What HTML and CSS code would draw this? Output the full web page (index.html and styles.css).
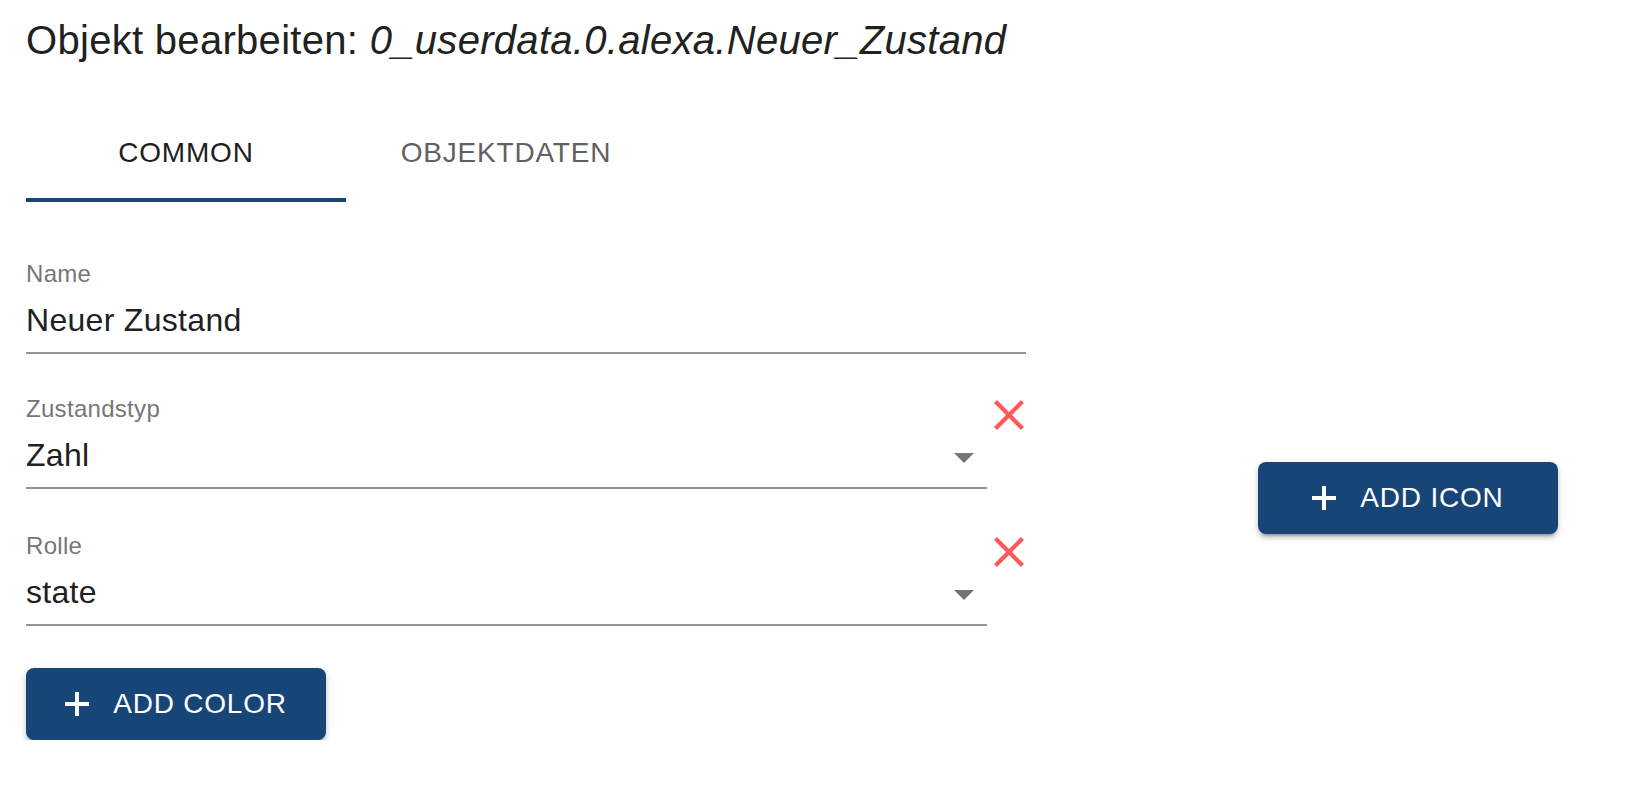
FILE: index.html
```html
<!DOCTYPE html>
<html lang="de">
<head>
<meta charset="utf-8">
<title>Objekt bearbeiten</title>
<link rel="stylesheet" href="styles.css">
</head>
<body>
<div class="page">
  <h1 class="title">Objekt bearbeiten: <em>0_userdata.0.alexa.Neuer_Zustand</em></h1>
  <div class="tabs">
    <div class="tab active">COMMON</div>
    <div class="tab">OBJEKTDATEN</div>
  </div>
  <div class="content">
    <div class="form">
      <div class="field">
        <div class="label">Name</div>
        <div class="input"><span class="value">Neuer Zustand</span></div>
      </div>
      <div class="row">
        <div class="field select">
          <div class="label">Zustandstyp</div>
          <div class="input">
            <span class="value">Zahl</span>
            <svg class="arrow" viewBox="7 10 10 5" width="20" height="10"><path d="M7 10l5 5 5-5z"/></svg>
          </div>
        </div>
        <div class="clear">
          <svg viewBox="5 5 14 14" width="30" height="30"><path d="M19 6.41L17.59 5 12 10.59 6.41 5 5 6.41 10.59 12 5 17.59 6.41 19 12 13.41 17.59 19 19 17.59 13.41 12z"/></svg>
        </div>
      </div>
      <div class="row row-role">
        <div class="field select">
          <div class="label">Rolle</div>
          <div class="input">
            <span class="value">state</span>
            <svg class="arrow" viewBox="7 10 10 5" width="20" height="10"><path d="M7 10l5 5 5-5z"/></svg>
          </div>
        </div>
        <div class="clear">
          <svg viewBox="5 5 14 14" width="30" height="30"><path d="M19 6.41L17.59 5 12 10.59 6.41 5 5 6.41 10.59 12 5 17.59 6.41 19 12 13.41 17.59 19 19 17.59 13.41 12z"/></svg>
        </div>
      </div>
      <button class="btn btn-color">
        <svg class="plus" viewBox="0 0 24 24" width="24" height="24"><rect x="0" y="10" width="24" height="4"/><rect x="10" y="0" width="4" height="24"/></svg>
        <span>ADD COLOR</span>
      </button>
    </div>
    <div class="side">
      <button class="btn">
        <svg class="plus" viewBox="0 0 24 24" width="24" height="24"><rect x="0" y="10" width="24" height="4"/><rect x="10" y="0" width="4" height="24"/></svg>
        <span>ADD ICON</span>
      </button>
    </div>
  </div>
</div>
</body>
</html>
```
FILE: styles.css
```css
* { box-sizing: border-box; }

html, body {
  margin: 0;
  padding: 0;
  background: #ffffff;
}

body {
  font-family: "Liberation Sans", Arial, Helvetica, sans-serif;
  color: #212121;
}

.page {
  padding: 8px 0 0 26px;
}

.title {
  margin: 0;
  font-size: 40px;
  font-weight: 400;
  line-height: 64px;
  letter-spacing: 0.3px;
  color: #212121;
}

.title em {
  font-style: italic;
}

.tabs {
  display: flex;
  margin-top: 34px;
  height: 96px;
}

.tab {
  width: 320px;
  height: 96px;
  display: flex;
  align-items: center;
  justify-content: center;
  font-size: 28px;
  letter-spacing: 0.8px;
  color: #616161;
  border-bottom: 4px solid transparent;
  padding-top: 2px;
}

.tab.active {
  color: #1e1e1e;
  border-bottom-color: #184578;
}

.content {
  display: flex;
  align-items: flex-start;
  padding-top: 60px;
}

.form {
  width: 1000px;
  display: flex;
  flex-direction: column;
  gap: 43px;
}

.field {
  display: flex;
  flex-direction: column;
}

.label {
  font-size: 24px;
  line-height: 24px;
  letter-spacing: 0.3px;
  color: #767676;
  margin-bottom: 15px;
}

.input {
  display: flex;
  align-items: flex-start;
  padding-bottom: 13px;
  border-bottom: 2px solid #949494;
}

.value {
  flex: 1;
  font-size: 32px;
  line-height: 38px;
  letter-spacing: 0.3px;
  color: #212121;
}

.arrow {
  fill: #757575;
  margin-top: 17px;
  margin-right: 13px;
}

.row {
  display: flex;
  align-items: flex-start;
}

.row-role {
  margin-top: 2px;
}

.select {
  flex: 1;
}

.clear {
  width: 39px;
  padding-left: 7px;
  padding-top: 3px;
  display: flex;
}

.clear svg {
  fill: #ff5858;
  display: block;
}

.btn {
  width: 300px;
  height: 72px;
  display: flex;
  align-items: center;
  justify-content: center;
  gap: 24px;
  border: none;
  border-radius: 8px;
  background: #184578;
  color: #ffffff;
  font-family: "Liberation Sans", Arial, Helvetica, sans-serif;
  font-size: 28px;
  letter-spacing: 0.8px;
  padding: 0;
  box-shadow: 0 6px 2px -4px rgba(0,0,0,0.2), 0 4px 4px 0 rgba(0,0,0,0.14), 0 2px 10px 0 rgba(0,0,0,0.12);
}

.btn-color {
  margin-top: -1px;
}

.plus {
  fill: #ffffff;
  display: block;
}

.side {
  margin-left: 232px;
  margin-top: 200px;
}
```
